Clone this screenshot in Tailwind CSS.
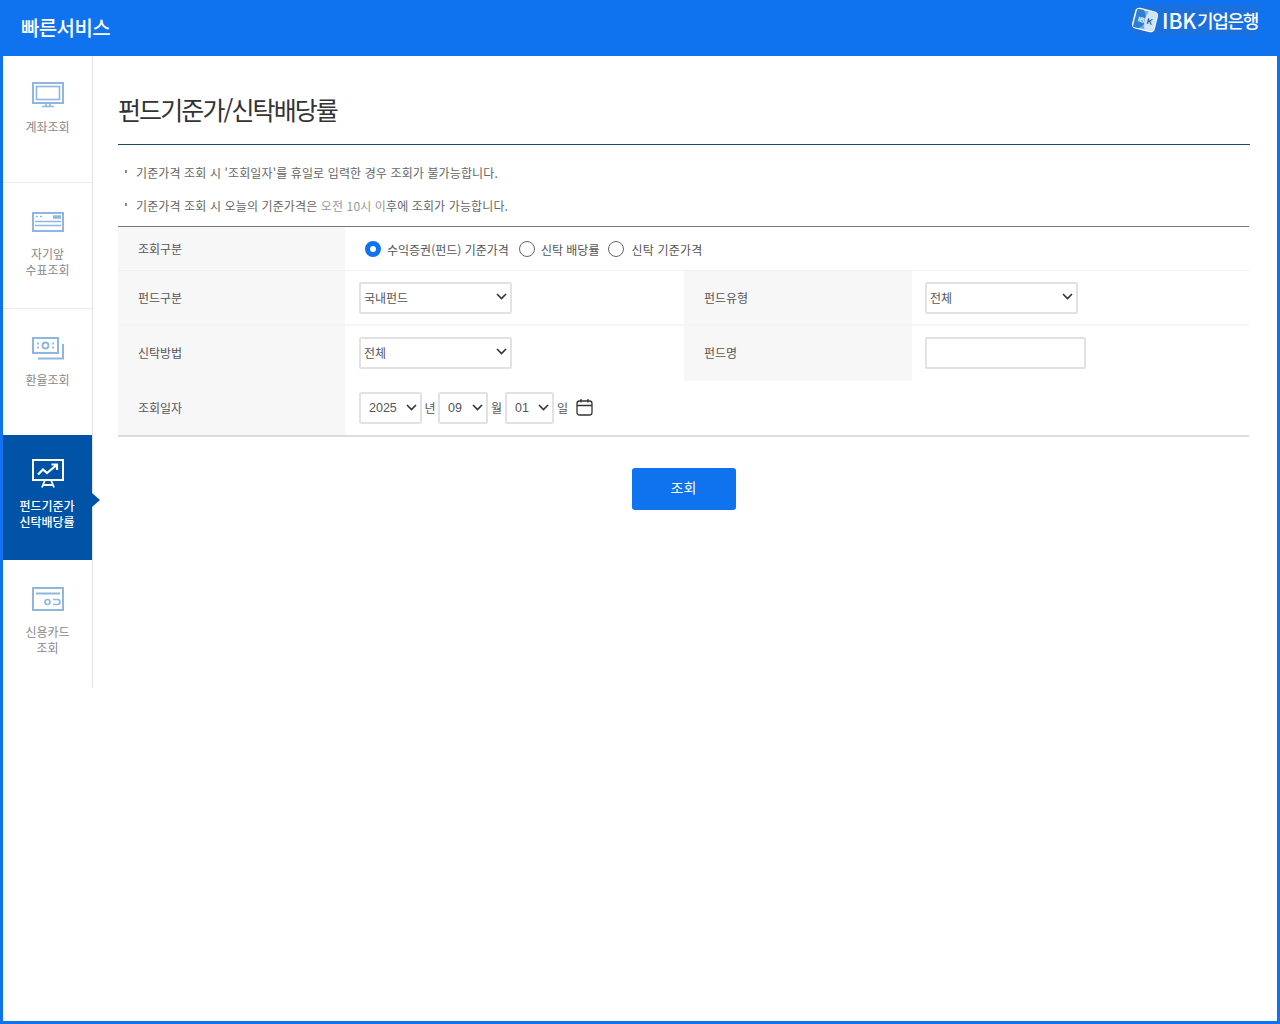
<!DOCTYPE html>
<html lang="ko">

<head>
    <meta charset="UTF-8">
    <meta name="viewport" content="width=device-width, initial-scale=1.0">
    <title>빠른서비스</title>
    <script src="https://cdn.jsdelivr.net/npm/@tailwindcss/browser@4"></script>
</head>

<body>
    <div class="flex h-[1024px] w-[1280px] flex-col bg-[#0f72ee] px-[3px] pb-[3px] font-['Noto_Sans_CJK_KR','Liberation_Sans',sans-serif]">
        <!-- Header -->
        <header class="flex h-[56px] shrink-0 items-start justify-between">
            <h1 class="mt-[13px] ml-[18px] text-[20px] leading-[30px] font-medium tracking-[-0.6px] text-white">빠른서비스</h1>
            <div class="mt-[5px] mr-[19px] flex h-[30px] items-center rounded-sm bg-[#2a6dcc]/50 text-white">
                <svg class="h-[30px] w-[31px]" viewBox="0 0 31 30" fill="none">
                    <g transform="rotate(14 15 15)">
                        <rect x="4" y="5" width="22" height="20" rx="3.500" fill="#6fb3e6" stroke="#fff" stroke-width="1.400" />
                        <path d="M11 5.500C17 10 17 20 11 24.500H5V6Z" fill="#2f7fd0" />
                        <path d="M17 5.500C14 11 14 19 17 24.500H25.500V6Z" fill="#cfe6f6" />
                        <text x="8" y="18" font-size="7" font-family="Liberation Sans" font-weight="700" fill="#fff">IB</text>
                        <text x="17" y="18" font-size="8" font-family="Liberation Sans" font-weight="700" fill="#0b4e9c">K</text>
                    </g>
                </svg>
                <span class="ml-[1px] text-[21px] leading-[28px] font-medium tracking-[-0.2px]">IBK</span>
                <span class="ml-[1px] text-[18px] leading-[28px] font-medium tracking-[-1.300px]">기업은행</span>
            </div>
        </header>

        <div class="flex flex-1 bg-white">
            <!-- Sidebar -->
            <nav class="h-[631px] w-[90px] shrink-0 border-r border-[#e2e2e2] text-center text-[12px] leading-[16px] text-[#888]">
                <a class="flex h-[127px] flex-col items-center border-b border-[#ececec] pt-[26px]">
                    <svg class="h-[26px] w-[32px]" viewBox="0 0 32 26" fill="none" stroke="#8fb6de" stroke-width="2">
                        <rect x="1" y="1" width="30" height="20" />
                        <rect x="4.500" y="4.500" width="23" height="13" stroke-width="1.600" />
                        <path d="M10 24.500H22M14 21V24M18 21V24" stroke-width="1.600" />
                    </svg>
                    <span class="mt-[11px]">계좌조회</span>
                </a>
                <a class="flex h-[126px] flex-col items-center border-b border-[#ececec] pt-[29px]">
                    <svg class="h-[20px] w-[32px]" viewBox="0 0 32 20" fill="none" stroke="#8fb6de" stroke-width="2">
                        <rect x="1" y="1" width="30" height="18" />
                        <path d="M3 9.500H29M3 13.500H29" stroke-width="1.600" />
                        <path d="M21 5H29" stroke-width="3.500" />
                        <path d="M4 4.500H6M8 4.500H10" stroke-width="1.600" />
                    </svg>
                    <span class="mt-[14px]">자기앞<br>수표조회</span>
                </a>
                <a class="flex h-[126px] flex-col items-center pt-[28px]">
                    <svg class="h-[23px] w-[32px]" viewBox="0 0 32 23" fill="none" stroke="#8fb6de" stroke-width="2">
                        <rect x="1" y="1" width="25" height="15" />
                        <circle cx="13.500" cy="8.500" r="3" stroke-width="1.800" />
                        <path d="M6 5.500V7.500M6 9.500V11.500M21 5.500V7.500M21 9.500V11.500" stroke-width="1.800" />
                        <path d="M31 7V21.500H6" />
                    </svg>
                    <span class="mt-[12px]">환율조회</span>
                </a>
                <a class="relative flex h-[125px] w-[89px] flex-col items-center bg-[#0053a6] pt-[24px] font-medium text-white">
                    <svg class="h-[29px] w-[32px]" viewBox="0 0 32 29" fill="none" stroke="#fff" stroke-width="2">
                        <rect x="1" y="1" width="30" height="20" />
                        <path d="M6 15.500L11 10.500L15 14L24 6.500M19.500 5.500H25V11" stroke-width="2.200" />
                        <path d="M13 21L10 28.500M19 21L22 28.500M11 26H21" stroke-width="1.800" />
                    </svg>
                    <span class="mt-[10px] -ml-[1px]">펀드기준가<br>신탁배당률</span>
                    <span class="absolute top-[58px] left-[89px] h-0 w-0 border-y-[7px] border-l-[8px] border-y-transparent border-l-[#0053a6]"></span>
                </a>
                <a class="flex h-[126px] flex-col items-center pt-[27px]">
                    <svg class="h-[24px] w-[32px]" viewBox="0 0 32 24" fill="none" stroke="#8fb6de" stroke-width="2">
                        <rect x="1" y="1" width="30" height="22" />
                        <path d="M4 6.500H28" stroke-width="2" />
                        <circle cx="15.500" cy="15" r="2.500" stroke-width="1.600" />
                        <path d="M21 12.500H25.500A2.500 2.500 0 0 1 25.500 17.500H21" stroke-width="1.600" />
                    </svg>
                    <span class="mt-[13px]">신용카드<br>조회</span>
                </a>
            </nav>

            <!-- Content -->
            <main class="w-[1157px] pl-[25px]">
                <h2 class="flex h-[89px] items-start border-b border-[#1f4a66] pt-[35px] text-[25px] leading-[37px] tracking-[-1.900px] text-[#333]">펀드기준가/신탁배당률</h2>

                <ul class="pt-[19px] text-[12px] leading-[18px] tracking-[0.12px] text-[#666]">
                    <li class="flex items-start pl-[7px]"><span class="mt-[6px] mr-[9px] h-[3px] w-[2px] bg-[#888]"></span>기준가격 조회 시 '조회일자'를 휴일로 입력한 경우 조회가 불가능합니다.</li>
                    <li class="mt-[15px] flex items-start pl-[7px]"><span class="mt-[6px] mr-[9px] h-[3px] w-[2px] bg-[#888]"></span><span>기준가격 조회 시 오늘의 기준가격은 <span class="text-[#999]">오전 10시 이</span>후에 조회가 가능합니다.</span></li>
                </ul>

                <!-- Search form -->
                <div class="mt-[11px] w-[1131px] border-t border-b-2 border-t-[#777] border-b-[#dcdcdc] text-[12px] text-[#555]">
                    <div class="flex h-[44px] border-b border-[#f0f0f0]">
                        <div class="flex w-[227px] items-center bg-[#f7f7f7] pl-[20px]">조회구분</div>
                        <div class="flex items-center pl-[20px]">
                            <input type="radio" name="kind" checked class="h-[16px] w-[16px] appearance-none rounded-full border-[5px] border-[#0f72ee]">
                            <span class="mt-[2px] ml-[6px]">수익증권(펀드) 기준가격</span>
                            <input type="radio" name="kind" class="ml-[10px] h-[16px] w-[16px] appearance-none rounded-full border border-[#666]">
                            <span class="mt-[2px] ml-[6px]">신탁 배당률</span>
                            <input type="radio" name="kind" class="ml-[9px] h-[16px] w-[16px] appearance-none rounded-full border border-[#666]">
                            <span class="mt-[2px] ml-[7px] tracking-[0.2px]">신탁 기준가격</span>
                        </div>
                    </div>
                    <div class="flex h-[55px] border-b-2 border-[#f5f5f5]">
                        <div class="flex w-[227px] items-center bg-[#f7f7f7] pl-[20px]">펀드구분</div>
                        <div class="flex w-[339px] items-center pl-[14px]">
                            <div class="relative">
                                <select class="h-[32px] w-[153px] appearance-none rounded-[2px] border-2 border-[#e2e2e2] bg-white pl-[3px]">
                                    <option>국내펀드</option>
                                </select>
                                <svg class="absolute top-[10px] right-[5px] h-[9px] w-[11px]" viewBox="0 0 11 9" fill="none" stroke="#333" stroke-width="1.600"><path d="M1 2L5.500 6.500L10 2" /></svg>
                            </div>
                        </div>
                        <div class="flex w-[228px] items-center bg-[#f7f7f7] pl-[20px]">펀드유형</div>
                        <div class="flex items-center pl-[13px]">
                            <div class="relative">
                                <select class="h-[32px] w-[153px] appearance-none rounded-[2px] border-2 border-[#e2e2e2] bg-white pl-[3px]">
                                    <option>전체</option>
                                </select>
                                <svg class="absolute top-[10px] right-[5px] h-[9px] w-[11px]" viewBox="0 0 11 9" fill="none" stroke="#333" stroke-width="1.600"><path d="M1 2L5.500 6.500L10 2" /></svg>
                            </div>
                        </div>
                    </div>
                    <div class="flex h-[55px]">
                        <div class="flex w-[227px] items-center bg-[#f7f7f7] pb-[1px] pl-[20px]">신탁방법</div>
                        <div class="flex w-[339px] items-center pl-[14px]">
                            <div class="relative mb-[2px]">
                                <select class="h-[32px] w-[153px] appearance-none rounded-[2px] border-2 border-[#e2e2e2] bg-white pl-[3px]">
                                    <option>전체</option>
                                </select>
                                <svg class="absolute top-[10px] right-[5px] h-[9px] w-[11px]" viewBox="0 0 11 9" fill="none" stroke="#333" stroke-width="1.600"><path d="M1 2L5.500 6.500L10 2" /></svg>
                            </div>
                        </div>
                        <div class="flex w-[228px] items-center bg-[#f7f7f7] pb-[1px] pl-[20px]">펀드명</div>
                        <div class="flex items-center pl-[13px]">
                            <input type="text" class="mb-[2px] h-[32px] w-[161px] rounded-[2px] border-2 border-[#e2e2e2] bg-white">
                        </div>
                    </div>
                    <div class="flex h-[54px]">
                        <div class="flex w-[227px] items-center bg-[#f7f7f7] pl-[20px]">조회일자</div>
                        <div class="flex items-center pl-[14px]">
                            <div class="relative mb-[1px]">
                                <select class="h-[32px] w-[63px] appearance-none rounded-[2px] border-2 border-[#e2e2e2] bg-white pt-[1px] pl-[8px] font-['Liberation_Sans'] text-[12.500px]">
                                    <option>2025</option>
                                </select>
                                <svg class="absolute top-[11px] right-[5px] h-[9px] w-[11px]" viewBox="0 0 11 9" fill="none" stroke="#333" stroke-width="1.600"><path d="M1 2L5.500 6.500L10 2" /></svg>
                            </div>
                            <span class="mx-[2.500px]">년</span>
                            <div class="relative mb-[1px]">
                                <select class="h-[32px] w-[50px] appearance-none rounded-[2px] border-2 border-[#e2e2e2] bg-white pt-[1px] pl-[8px] font-['Liberation_Sans'] text-[12.500px]">
                                    <option>09</option>
                                </select>
                                <svg class="absolute top-[11px] right-[5px] h-[9px] w-[11px]" viewBox="0 0 11 9" fill="none" stroke="#333" stroke-width="1.600"><path d="M1 2L5.500 6.500L10 2" /></svg>
                            </div>
                            <span class="mx-[3px]">월</span>
                            <div class="relative mb-[1px]">
                                <select class="h-[32px] w-[49px] appearance-none rounded-[2px] border-2 border-[#e2e2e2] bg-white pt-[1px] pl-[8px] font-['Liberation_Sans'] text-[12.500px]">
                                    <option>01</option>
                                </select>
                                <svg class="absolute top-[11px] right-[5px] h-[9px] w-[11px]" viewBox="0 0 11 9" fill="none" stroke="#333" stroke-width="1.600"><path d="M1 2L5.500 6.500L10 2" /></svg>
                            </div>
                            <span class="mx-[3px]">일</span>
                            <svg class="mb-[3px] ml-[5px] h-[18px] w-[17px]" viewBox="0 0 17 18" fill="none" stroke="#333" stroke-width="1.300">
                                <rect x="1" y="3" width="15" height="14" rx="2.500" />
                                <path d="M1 7.500H16M5 1V4.500M12 1V4.500" />
                            </svg>
                        </div>
                    </div>
                </div>

                <div class="mt-[31px] flex w-[1131px] justify-center">
                    <button class="h-[42px] w-[104px] rounded-[3px] bg-[#0f72ee] pb-[3px] text-[14px] text-white">조회</button>
                </div>
            </main>
        </div>
    </div>
</body>

</html>
